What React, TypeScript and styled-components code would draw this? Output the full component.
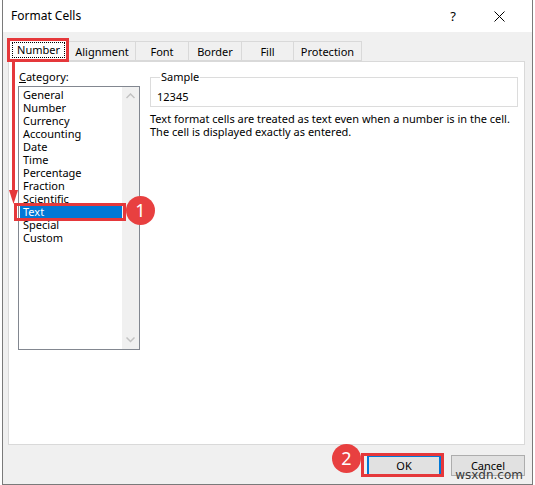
import React from 'react';
import styled, { createGlobalStyle } from 'styled-components';

const GlobalStyle = createGlobalStyle`
  html, body {
    margin: 0;
    padding: 0;
    background: #ffffff;
  }
  body {
    font-family: "Noto Sans", "Open Sans", sans-serif;
    font-size: 11px;
    color: #000;
  }
`;

const annotationRed = '#e5383b';

const Dialog = styled.div`
  margin-left: 2px;
  width: 529px;
  height: 484px;
  border: 1px solid #7a7a7a;
  border-top: none;
  background: #f0f0f0;
  display: flex;
  flex-direction: column;
`;

const TitleBar = styled.div`
  height: 32px;
  background: #ffffff;
  display: flex;
  align-items: center;
  padding: 0 10px 0 8px;
`;

const Title = styled.div`
  flex: 1;
  font-size: 12px;
  line-height: 14px;
`;

const TitleButton = styled.div`
  width: 46px;
  height: 32px;
  display: flex;
  align-items: center;
  justify-content: center;
  font-size: 13px;
`;

const Body = styled.div`
  position: relative;
  flex: 1;
  display: flex;
  flex-direction: column;
  padding: 7px 7px 8px 5px;
`;

const TabStrip = styled.div`
  display: flex;
  align-items: flex-end;
  height: 22px;
`;

const Tab = styled.div<{ $active?: boolean; $width: number; $marked?: boolean }>`
  position: relative;
  width: ${({ $width }) => $width}px;
  height: ${({ $active }) => ($active ? 23 : 20)}px;
  margin-bottom: ${({ $active }) => ($active ? -1 : 0)}px;
  margin-right: -1px;
  box-sizing: border-box;
  background: ${({ $active }) => ($active ? '#ffffff' : '#f0f0f0')};
  border: 1px solid #d9d9d9;
  border-bottom: ${({ $active }) => ($active ? 'none' : '1px solid #d9d9d9')};
  z-index: ${({ $active }) => ($active ? 2 : 1)};
  display: flex;
  align-items: center;
  justify-content: center;
  padding-bottom: ${({ $active }) => ($active ? 2 : 0)}px;

  &::after {
    content: '';
    display: ${({ $marked }) => ($marked ? 'block' : 'none')};
    position: absolute;
    top: -2px;
    left: -2px;
    right: -1px;
    bottom: 0;
    border: 3px solid ${annotationRed};
  }
`;

const FocusLabel = styled.span`
  border: 1px dotted #000;
  padding: 0 4px;
  line-height: 14px;
`;

const Panel = styled.div`
  height: 384px;
  box-sizing: border-box;
  background: #ffffff;
  border: 1px solid #d9d9d9;
  display: flex;
  gap: 10px;
  padding: 8px 0 0 9px;
`;

const CategoryColumn = styled.div`
  display: flex;
  flex-direction: column;
`;

const FieldLabel = styled.div`
  padding-left: 1px;
  line-height: 14px;
  height: 16px;
`;

const ListBox = styled.div`
  display: flex;
  width: 122px;
  height: 264px;
  box-sizing: border-box;
  border: 1px solid #828790;
`;

const ListItems = styled.div`
  flex: 1;
  padding-top: 1px;
`;

const ListItem = styled.div<{ $selected?: boolean; $marked?: boolean }>`
  position: relative;
  height: 13px;
  line-height: 13px;
  padding-left: 3px;
  white-space: nowrap;
  background: ${({ $selected }) => ($selected ? '#0078d7' : 'transparent')};
  color: ${({ $selected }) => ($selected ? '#ffffff' : '#000000')};
  border-left: 1px solid ${({ $selected }) => ($selected ? '#ffffff' : 'transparent')};

  &::after {
    content: '';
    display: ${({ $marked }) => ($marked ? 'block' : 'none')};
    position: absolute;
    top: -2px;
    left: -6px;
    right: -4px;
    bottom: -3px;
    border: 3px solid ${annotationRed};
  }
`;

const ScrollTrack = styled.div`
  width: 17px;
  background: #f0f0f0;
  display: flex;
  flex-direction: column;
  justify-content: space-between;
  align-items: center;
  padding: 6px 0;
`;

const StepBadge = styled.div<{ $left: number; $top: number }>`
  position: absolute;
  left: ${({ $left }) => $left}px;
  top: ${({ $top }) => $top}px;
  width: 29px;
  height: 29px;
  border-radius: 50%;
  background: #e84040;
  color: #ffffff;
  font-size: 18px;
  line-height: 29px;
  text-align: center;
  z-index: 5;
`;

const DetailColumn = styled.div`
  display: flex;
  flex-direction: column;
  width: 368px;
`;

const SampleGroup = styled.fieldset`
  margin: 0;
  padding: 6px 5px 2px 6px;
  border: 1px solid #dcdcdc;
  min-width: 0;

  legend {
    padding: 0 1px;
    margin-left: 3px;
    line-height: 14px;
  }
`;

const SampleValue = styled.div`
  line-height: 14px;
`;

const Description = styled.p`
  margin: 5px 0 0 0;
  line-height: 13px;
  white-space: nowrap;
`;

const ButtonRow = styled.div`
  position: relative;
  display: flex;
  justify-content: flex-end;
  gap: 10px;
  margin-top: 10px;
`;

const Button = styled.div<{ $default?: boolean; $marked?: boolean }>`
  position: relative;
  width: 74px;
  height: 21px;
  box-sizing: border-box;
  background: #e1e1e1;
  border: 1px solid ${({ $default }) => ($default ? '#0078d7' : '#adadad')};
  box-shadow: ${({ $default }) => ($default ? 'inset 0 0 0 1px #0078d7' : 'none')};
  display: flex;
  align-items: center;
  justify-content: center;

  &::after {
    content: '';
    display: ${({ $marked }) => ($marked ? 'block' : 'none')};
    position: absolute;
    top: -3px;
    left: -7px;
    right: -4px;
    bottom: -2px;
    border: 3px solid ${annotationRed};
  }
`;

const Watermark = styled.div`
  position: absolute;
  right: 2px;
  bottom: -6px;
  font-family: "DejaVu Sans", sans-serif;
  font-size: 12px;
  color: #3a3a3a;
  z-index: 4;
`;

const ArrowOverlay = styled.svg`
  position: absolute;
  left: 6px;
  top: 30px;
  z-index: 6;
`;

const CloseIcon = () => (
  <svg width="11" height="11" viewBox="0 0 11 11">
    <path d="M0.5 0.5 L10.5 10.5 M10.5 0.5 L0.5 10.5" stroke="#000" strokeWidth="1" fill="none" />
  </svg>
);

const Chevron: React.FC<{ down?: boolean }> = ({ down }) => (
  <svg width="9" height="6" viewBox="0 0 9 6">
    <polyline
      points={down ? '0.5,0.5 4.5,4.5 8.5,0.5' : '0.5,5 4.5,1 8.5,5'}
      stroke="#c2c2c2"
      strokeWidth="1.5"
      fill="none"
    />
  </svg>
);

const tabs = [
  { label: 'Number', width: 61 },
  { label: 'Alignment', width: 68 },
  { label: 'Font', width: 54 },
  { label: 'Border', width: 54 },
  { label: 'Fill', width: 53 },
  { label: 'Protection', width: 69 },
];

const categories = [
  'General', 'Number', 'Currency', 'Accounting', 'Date', 'Time',
  'Percentage', 'Fraction', 'Scientific', 'Text', 'Special', 'Custom',
];

const App: React.FC = () => {
  return (
    <>
      <GlobalStyle />
      <Dialog>
        <TitleBar>
          <Title>Format Cells</Title>
          <TitleButton>?</TitleButton>
          <TitleButton><CloseIcon /></TitleButton>
        </TitleBar>

        <Body>
          <TabStrip>
            {tabs.map((tab, index) => (
              <Tab key={tab.label} $width={tab.width} $active={index === 0} $marked={index === 0}>
                {index === 0 ? <FocusLabel>{tab.label}</FocusLabel> : tab.label}
              </Tab>
            ))}
          </TabStrip>

          <Panel>
            <CategoryColumn>
              <FieldLabel><u>C</u>ategory:</FieldLabel>
              <ListBox>
                <ListItems>
                  {categories.map(item => (
                    <ListItem key={item} $selected={item === 'Text'} $marked={item === 'Text'}>
                      {item}
                      {item === 'Text' && <StepBadge $left={106} $top={-9}>1</StepBadge>}
                    </ListItem>
                  ))}
                </ListItems>
                <ScrollTrack>
                  <Chevron />
                  <Chevron down />
                </ScrollTrack>
              </ListBox>
            </CategoryColumn>

            <DetailColumn>
              <SampleGroup>
                <legend>Sample</legend>
                <SampleValue>12345</SampleValue>
              </SampleGroup>
              <Description>
                Text format cells are treated as text even when a number is in the cell.
                <br />
                The cell is displayed exactly as entered.
              </Description>
            </DetailColumn>
          </Panel>

          <ButtonRow>
            <Button $default $marked>
              OK
              <StepBadge $left={-36} $top={-12}>2</StepBadge>
            </Button>
            <Button>Cancel</Button>
            <Watermark>wsxdn.com</Watermark>
          </ButtonRow>

          <ArrowOverlay width="10" height="145" viewBox="0 0 10 145">
            <line x1="4.5" y1="0" x2="4.5" y2="130" stroke={annotationRed} strokeWidth="3" />
            <polygon points="0,128 9,128 4.5,142" fill={annotationRed} />
          </ArrowOverlay>
        </Body>
      </Dialog>
    </>
  );
};

export default App;
